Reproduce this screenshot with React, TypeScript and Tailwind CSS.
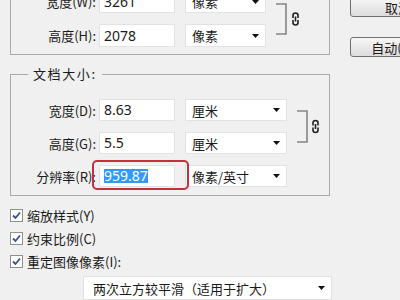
import React from 'react';

const cjk = "font-['Noto_Sans_CJK_SC',sans-serif]";
const num = "font-['Noto_Sans','Noto_Sans_CJK_SC',sans-serif]";

function Arrow() {
  return (
    <svg width="7" height="4" viewBox="0 0 7 4" className="shrink-0">
      <path d="M0 0H7L3.5 4Z" fill="#111" />
    </svg>
  );
}

function Select({ value, className }: { value: string; className: string }) {
  return (
    <div className={`flex items-center justify-between bg-white border border-[#e2e2e2] pl-[6px] pr-[6px] text-[13px] ${className}`}>
      <span className="leading-none">{value}</span>
      <Arrow />
    </div>
  );
}

function Link() {
  return (
    <svg width="7" height="14" viewBox="0 0 7 14">
      <path d="M1 6V3.5A2.5 2.5 0 0 1 6 3.5V6M1 8V10.5A2.5 2.5 0 0 0 6 10.5V8M3.5 4.5V9.5"
        fill="none" stroke="#222" strokeWidth="1.6" />
    </svg>
  );
}

function Bracket({ h, top, bottom, iconX }: { h: number; top: number; bottom: number; iconX: number }) {
  const mid = (top + bottom) / 2;
  return (
    <svg width="26" height={h} viewBox={`0 0 26 ${h}`} className="ml-[10px] shrink-0">
      <path d={`M0 ${top}H10V${bottom}H0`} fill="none" stroke="#858585" strokeWidth="1.6" />
      <g transform={`translate(${iconX} ${mid - 7})`}>
        <path d="M1 6V3.5A2.5 2.5 0 0 1 6 3.5V6M1 8V10.5A2.5 2.5 0 0 0 6 10.5V8M3.5 4.5V9.5"
          fill="none" stroke="#222" strokeWidth="1.6" />
      </g>
    </svg>
  );
}

function Row({ label, value, unit, selW, h, mark }: {
  label: string; value: string; unit: string; selW: string; h: string; mark?: boolean;
}) {
  return (
    <div className={`flex items-center ${h}`}>
      <div className="w-[85px] text-right text-[13px] leading-none">{label}</div>
      <div className="relative ml-[3px] h-full w-[76px]">
        <div className={`flex h-full items-center bg-white border border-[#e2e2e2] pl-[4px] text-[14px] ${num}`}>
          {mark ? <span className="bg-[#3399ff] text-white leading-[14px]">{value}</span> : <span className="leading-none">{value}</span>}
        </div>
        {mark && (
          <div className="absolute -left-[7px] -right-[14px] -top-[5px] -bottom-[3px] rounded-[5px] border-2 border-[#c4303c]" />
        )}
      </div>
      <Select value={unit} className={`ml-[10px] h-full ${selW}`} />
    </div>
  );
}

function Check({ label }: { label: string }) {
  return (
    <div className="flex h-[23px] items-center gap-[4px]">
      <div className="flex h-[13px] w-[13px] items-center justify-center border border-[#8e8f8f] bg-white">
        <svg width="11" height="11" viewBox="0 0 11 11">
          <path d="M2 5.5L4.5 8L9 2.5" fill="none" stroke="#3b4f93" strokeWidth="1.8" />
        </svg>
      </div>
      <span className="text-[13px] leading-none">{label}</span>
    </div>
  );
}

export default function App() {
  return (
    <div className={`flex h-[300px] w-[400px] overflow-hidden bg-[#f0f0f0] text-[#1a1a1a] ${cjk}`}>
      <div className="ml-[10px] w-[320px] shrink-0">
        <div className="-mt-[10px] flex items-start border-x border-b border-[#aaaaaa] pb-[7px]">
          <div className="flex flex-col gap-[11px]">
            <Row label="宽度(W):" value="3261" unit="像素" selW="w-[81px]" h="h-[23px]" />
            <Row label="高度(H):" value="2078" unit="像素" selW="w-[81px]" h="h-[23px]" />
          </div>
          <Bracket h={57} top={14} bottom={44} iconX={16} />
        </div>

        <fieldset className="mt-[10px] border border-[#aaaaaa] pb-[8px]">
          <legend className="ml-[17px] px-[5px] text-[13px] leading-[18px] tracking-[1.6px]">文档大小:</legend>
          <div className="mt-[16px] flex items-start">
            <div className="flex flex-col gap-[11px]">
              <Row label="宽度(D):" value="8.63" unit="厘米" selW="w-[102px]" h="h-[22px]" />
              <Row label="高度(G):" value="5.5" unit="厘米" selW="w-[102px]" h="h-[22px]" />
            </div>
            <Bracket h={55} top={12} bottom={43} iconX={15} />
          </div>
          <div className="mt-[11px]">
            <Row label="分辨率(R):" value="959.87" unit="像素/英寸" selW="w-[102px]" h="h-[22px]" mark />
          </div>
        </fieldset>

        <div className="mt-[8px] flex flex-col">
          <Check label="缩放样式(Y)" />
          <Check label="约束比例(C)" />
          <Check label="重定图像像素(I):" />
        </div>

        <Select value="两次立方较平滑（适用于扩大）" className="mt-[3px] ml-[73px] h-[24px] w-[249px] border-[#cfcfcf] pl-[9px]" />
      </div>

      <div className="-mt-[3px] ml-[20px] flex shrink-0 flex-col gap-[20px]">
        <button className="flex h-[20px] w-[96px] items-center justify-center rounded-[3px] border border-[#707070] bg-linear-to-b from-[#f7f7f7] to-[#dcdcdc] text-[13px] leading-none">
          取消
        </button>
        <button className="flex h-[20px] w-[96px] items-center justify-center rounded-[3px] border border-[#707070] bg-linear-to-b from-[#f7f7f7] to-[#dcdcdc] text-[13px] leading-none">
          自动(A)...
        </button>
      </div>
    </div>
  );
}
